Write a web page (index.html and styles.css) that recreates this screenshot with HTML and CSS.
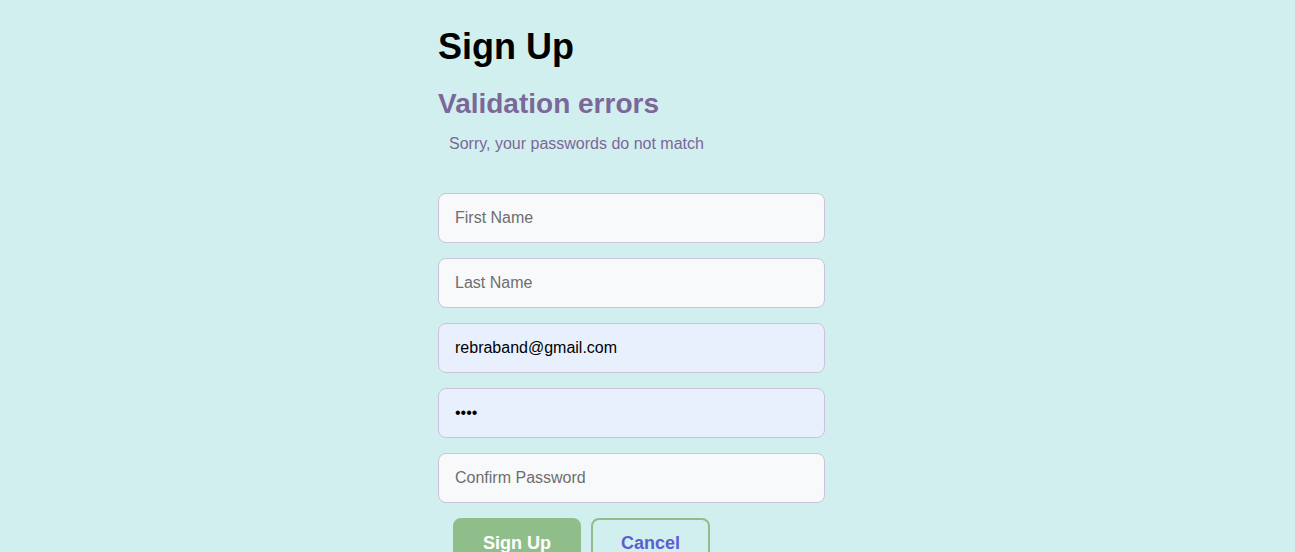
FILE: index.html
```html
<!DOCTYPE html>
<html lang="en">
<head>
<meta charset="utf-8">
<title>Sign Up</title>
<link rel="stylesheet" href="styles.css">
</head>
<body>
<main class="page">
  <section class="card">
    <h1 class="title">Sign Up</h1>
    <h2 class="errors-title">Validation errors</h2>
    <ul class="errors">
      <li>Sorry, your passwords do not match</li>
    </ul>
    <form class="form">
      <input class="field" type="text" placeholder="First Name">
      <input class="field" type="text" placeholder="Last Name">
      <input class="field filled" type="email" value="rebraband@gmail.com">
      <input class="field filled" type="password" value="abcd">
      <input class="field" type="password" placeholder="Confirm Password">
      <div class="actions">
        <button class="btn btn-primary" type="button">Sign Up</button>
        <button class="btn btn-outline" type="button">Cancel</button>
      </div>
    </form>
  </section>
</main>
</body>
</html>
```

FILE: styles.css
```css
html, body {
  margin: 0;
  padding: 0;
  background: #d2efef;
  font-family: "Liberation Sans", Arial, sans-serif;
}

.page {
  display: flex;
  justify-content: center;
}

.card {
  width: 419px;
}

.title {
  margin: 26px 0 0;
  font-size: 36px;
  line-height: 41px;
  font-weight: 700;
  color: #000;
}

.errors-title {
  margin: 21px 0 0;
  font-size: 28px;
  line-height: 32px;
  font-weight: 700;
  color: #7b6799;
}

.errors {
  list-style: none;
  margin: 15px 0 0;
  padding: 0 0 0 11px;
  font-size: 16px;
  line-height: 18px;
  color: #7b6799;
}

.form {
  display: flex;
  flex-direction: column;
  gap: 15px;
  margin-top: 40px;
}

.field {
  box-sizing: border-box;
  width: 387px;
  height: 50px;
  padding: 0 16px;
  border: 1px solid #c9c4db;
  border-radius: 8px;
  background: #f8f9fa;
  font-family: "Liberation Sans", Arial, sans-serif;
  font-size: 16px;
  color: #000;
  outline: none;
}

.field::placeholder {
  color: #6e6e6e;
}

.field.filled {
  background: #e8f0fe;
}

.actions {
  display: flex;
  gap: 10px;
  padding-left: 15px;
}

.btn {
  box-sizing: border-box;
  padding: 13px 28px 10px;
  border: 2px solid #8fbe8b;
  border-radius: 8px;
  font-family: "Liberation Sans", Arial, sans-serif;
  font-size: 18px;
  line-height: 21px;
  font-weight: 700;
  cursor: pointer;
}

.btn-primary {
  background: #8fbe8b;
  color: #fff;
}

.btn-outline {
  background: transparent;
  color: #5a5fcf;
}
```
